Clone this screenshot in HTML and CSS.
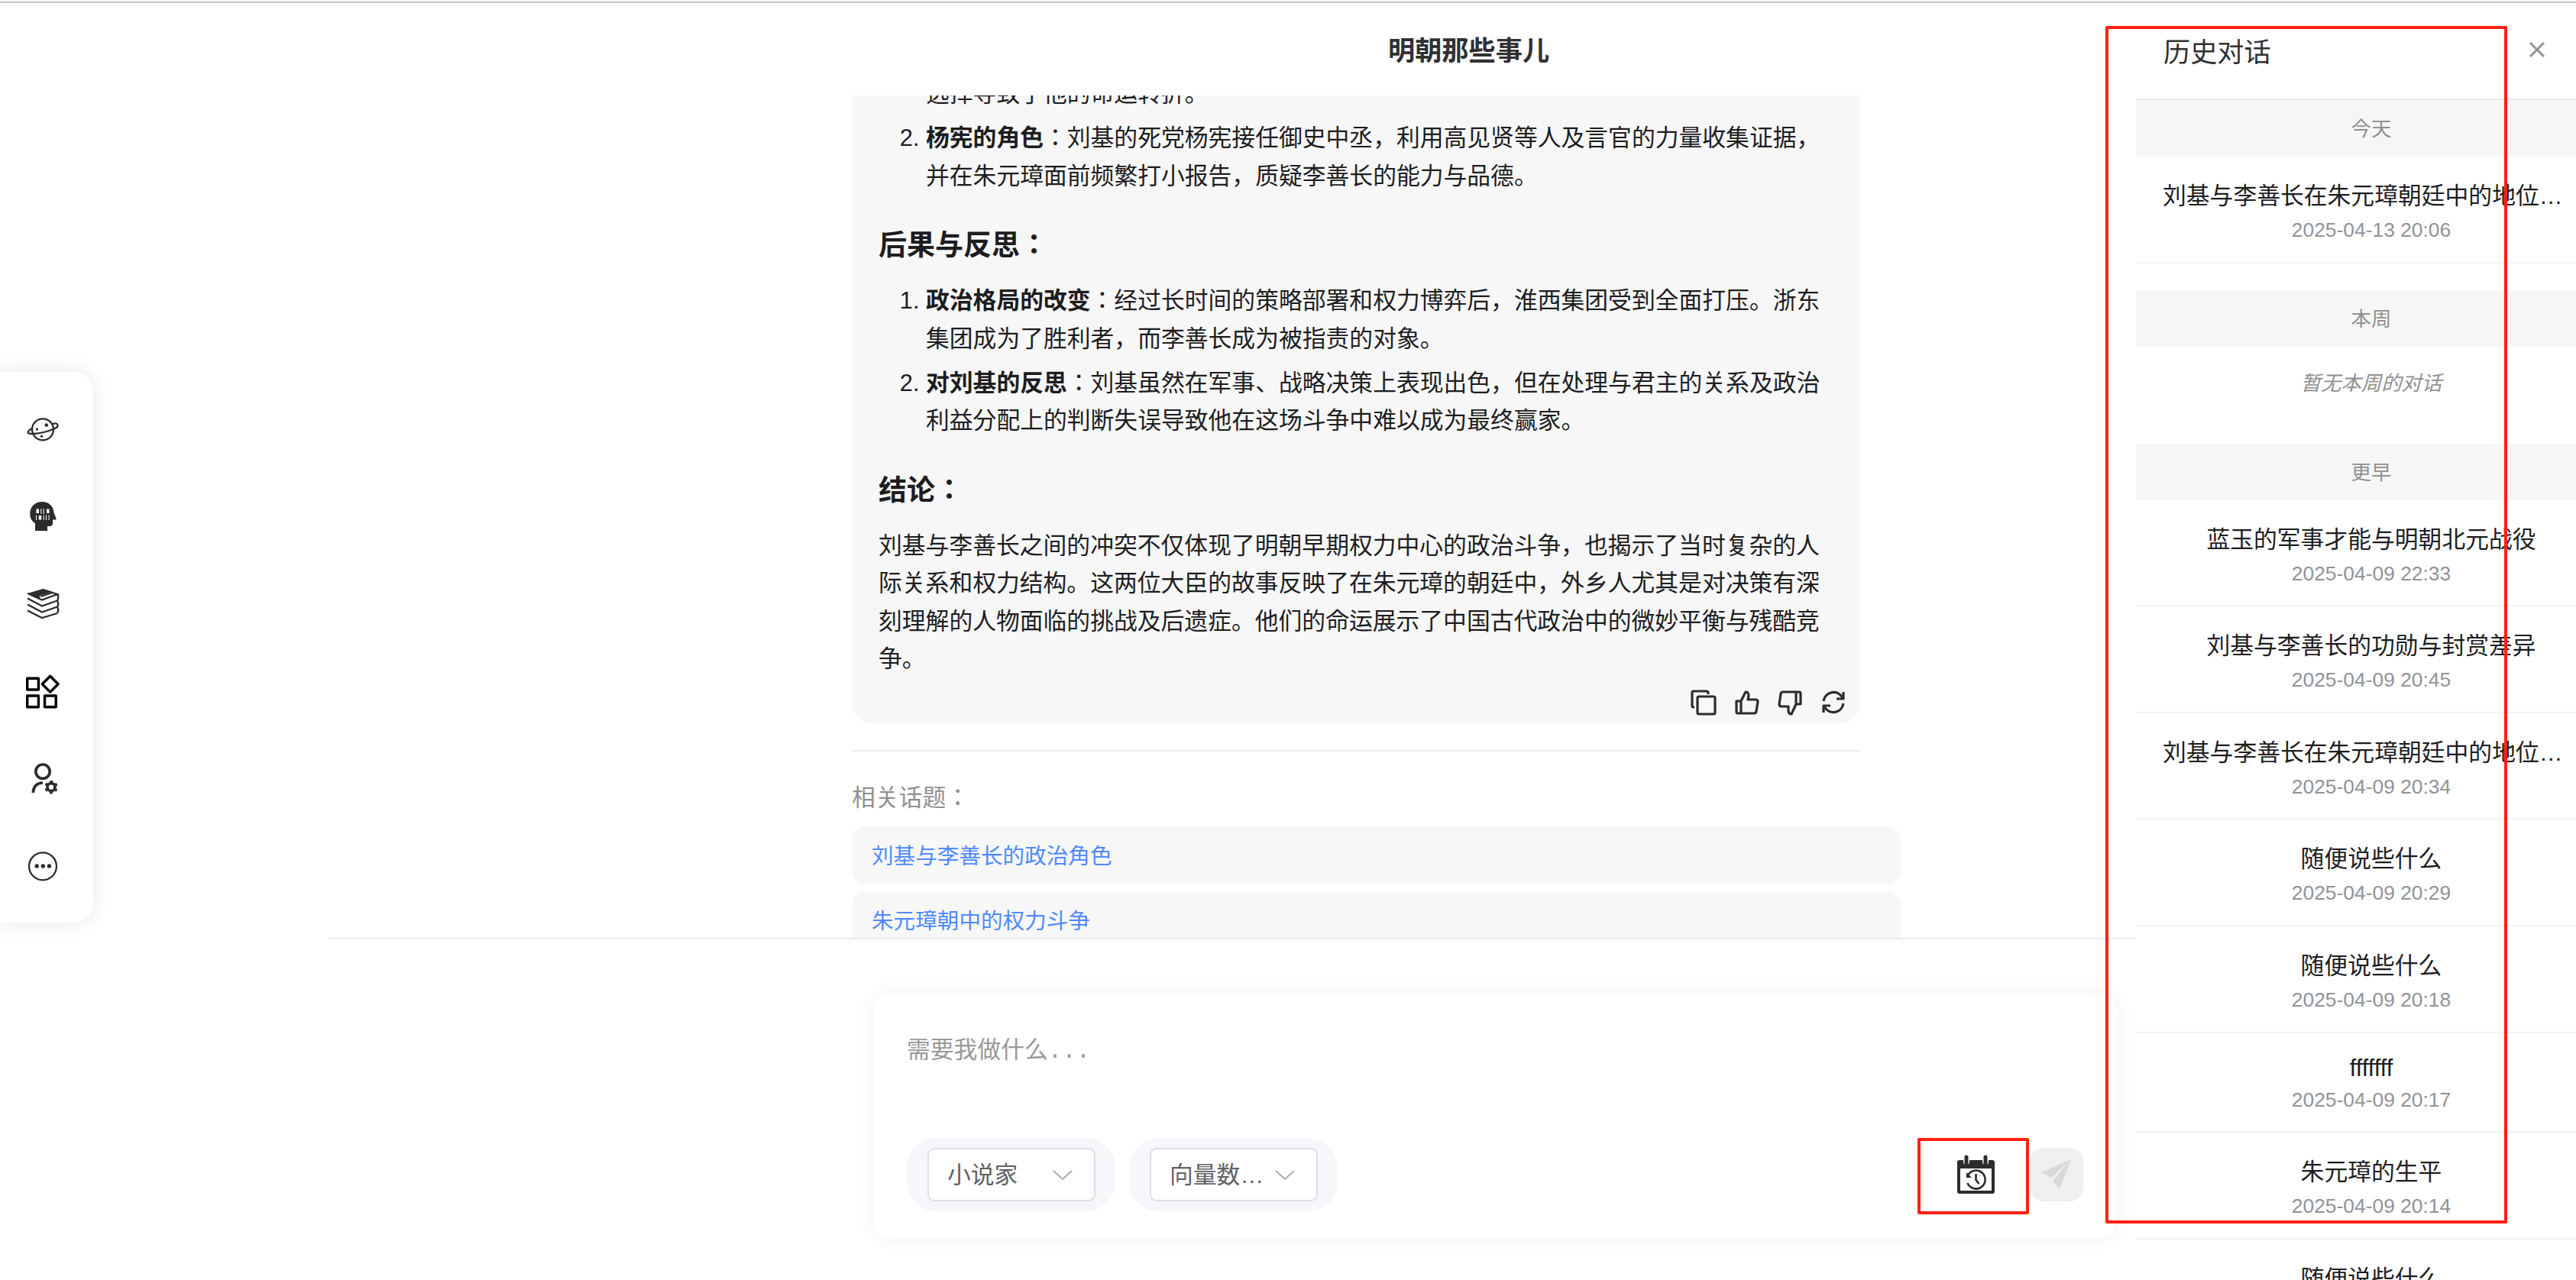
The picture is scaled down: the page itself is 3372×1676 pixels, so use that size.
FILE: index.html
```html
<!DOCTYPE html>
<html lang="en">
<head>
  <meta charset="UTF-8">
  <title>明朝那些事儿</title>
  <link rel="stylesheet" href="styles.css">
</head>
<body>
  <div class="app">
    <nav class="sidebar">
      <svg viewBox="0 0 44 44"><circle cx="22" cy="22.300" r="14" class="line"/><path class="line" d="M8 21C1 25 1 28 7 28c11 0 22-3 31-7 6-3 4-8-3-6"/><circle cx="14.500" cy="22" r="1.700"/><circle cx="26.800" cy="16.600" r="2.300"/><circle cx="20.500" cy="31.300" r="1.700"/></svg>
      <svg viewBox="0 0 44 44"><path d="M12 41V31C7 28 5.300 24 5.300 18.500 5.300 9 12 3 21 3c9 0 15 6 15.500 14l3 8v1.500H35V31q0 4-4 4h-3v6z"/><path class="code" d="M13.500 12.500H17V18h-3.500zM19.300 12h1v7h-1zM22.700 12h1v7h-1zM27 12.500h3.500V18H27zM13 20.500h1V27h-1zM16.700 21h3.500v5.500h-3.500zM22.700 20.500h1V27h-1zM26 20.500h1V27h-1zM29.500 20.500h1V27h-1z"/></svg>
      <svg viewBox="0 0 44 44"><path d="M2 9l20-6 13 4-17 5v4z"/><path class="line" d="M2 9l19 8.500L41 10 22 4M19 13l16-5M2 15.500l19 10 20-7M2 23.500l19 10 20-7M2 31.500L21 41l20-6M41 10q2.500 4 0 8.500 2.500 4 0 8 2.500 4.500 0 8.500"/></svg>
      <svg class="dark" viewBox="0 0 44 44"><path d="M1.700 5.300h14.700V20H1.700zM1.700 28h14.700v14.700H1.700zM24.500 28h14.700v14.700H24.500zM31.700 2.200l10.400 10.500-10.400 10.400-10.400-10.400z"/></svg>
      <svg viewBox="0 0 44 44"><circle cx="22" cy="13.200" r="9.200" class="bold"/><path class="bold" d="M9.300 41Q10 28.500 22 28"/><circle cx="33" cy="33.700" r="5" class="bold"/><circle cx="33" cy="33.700" r="7.500" class="cog"/></svg>
      <svg viewBox="0 0 44 44"><circle cx="22" cy="23.300" r="18" class="line"/><circle cx="14.200" cy="23" r="2.700"/><circle cx="22.300" cy="23" r="2.700"/><circle cx="30.400" cy="23" r="2.700"/></svg>
    </nav>

    <main class="main">
      <h1 class="title">明朝那些事儿</h1>
      <div class="chat">
        <div class="message">
          <ol class="cut">
            <li>选择导致了他的命运转折。</li>
            <li><b>杨宪的角色</b>：刘基的死党杨宪接任御史中丞，利用高见贤等人及言官的力量收集证据，并在朱元璋面前频繁打小报告，质疑李善长的能力与品德。</li>
          </ol>
          <h3>后果与反思：</h3>
          <ol>
            <li><b>政治格局的改变</b>：经过长时间的策略部署和权力博弈后，淮西集团受到全面打压。浙东集团成为了胜利者，而李善长成为被指责的对象。</li>
            <li><b>对刘基的反思</b>：刘基虽然在军事、战略决策上表现出色，但在处理与君主的关系及政治利益分配上的判断失误导致他在这场斗争中难以成为最终赢家。</li>
          </ol>
          <h3>结论：</h3>
          <p>刘基与李善长之间的冲突不仅体现了明朝早期权力中心的政治斗争，也揭示了当时复杂的人际关系和权力结构。这两位大臣的故事反映了在朱元璋的朝廷中，外乡人尤其是对决策有深刻理解的人物面临的挑战及后遗症。他们的命运展示了中国古代政治中的微妙平衡与残酷竞争。</p>
          <div class="actions">
            <svg viewBox="0 0 34 34"><path d="M5 23H4q-2 0-2-2V4q0-2 2-2h17q2 0 2 2v2"/><rect x="9" y="9" width="23" height="23" rx="2"/></svg>
            <svg viewBox="0 0 34 34"><path d="M3 15h6v16H5q-2 0-2-2zM9 15l6-12q4 0 4 5l-1 5h10q3 0 3 3l-2 12q0 3-3 3H9"/></svg>
            <svg viewBox="0 0 34 34"><path d="M31 19h-6V3h4q2 0 2 2zM25 19l-6 13q-4 0-4-5v-5H6q-3 0-3-3L5 6q0-3 3-3h17"/></svg>
            <svg viewBox="0 0 34 34"><path d="M4 15C6 2 23-1 29 11M30 3v9h-9M30 18C28 31 11 34 5 22M4 30v-9h9"/></svg>
          </div>
        </div>
        <div class="divider"></div>
        <div class="related">相关话题：</div>
        <a class="topic">刘基与李善长的政治角色</a>
        <a class="topic">朱元璋朝中的权力斗争</a>
      </div>

      <div class="composer">
        <div class="placeholder">需要我做什么...</div>
        <div class="tools">
          <div class="pill"><div class="select"><span>小说家</span><svg viewBox="0 0 26 14"><path d="M1 1l12 11L25 1"/></svg></div></div>
          <div class="pill"><div class="select"><span>向量数据库</span><svg viewBox="0 0 26 14"><path d="M1 1l12 11L25 1"/></svg></div></div>
          <div class="history-btn">
            <svg viewBox="0 0 49 50"><path d="M3 6h5v2a4 4 0 0 0 8 0V6h17v2a4 4 0 0 0 8 0V6h5q3 0 3 3v38q0 3-3 3H3q-3 0-3-3V9q0-3 3-3zM4 17v29h41V17z" fill-rule="evenodd"/><path d="M12 2v8M37 2v8" class="ring"/><path d="M13.500 36A12 12 0 1 0 14 26M24.500 24v8l4 5" class="hand"/><path d="M12 22v7h7z"/></svg>
          </div>
          <div class="send"><svg viewBox="0 0 40 40"><path d="M0 17L39 0 13 24zM39 0L24 39 15 28z"/></svg></div>
        </div>
      </div>
    </main>

    <aside class="history">
      <div class="history-head">
        <span>历史对话</span>
        <svg viewBox="0 0 20 20"><path d="M1 1l18 18M19 1L1 19"/></svg>
      </div>
      <div class="group">今天</div>
      <div class="item"><div class="name">刘基与李善长在朱元璋朝廷中的地位与冲突</div><div class="date">2025-04-13 20:06</div></div>
      <div class="group next">本周</div>
      <div class="empty">暂无本周的对话</div>
      <div class="group">更早</div>
      <div class="item"><div class="name">蓝玉的军事才能与明朝北元战役</div><div class="date">2025-04-09 22:33</div></div>
      <div class="item"><div class="name">刘基与李善长的功勋与封赏差异</div><div class="date">2025-04-09 20:45</div></div>
      <div class="item"><div class="name">刘基与李善长在朱元璋朝廷中的地位与冲突</div><div class="date">2025-04-09 20:34</div></div>
      <div class="item"><div class="name">随便说些什么</div><div class="date">2025-04-09 20:29</div></div>
      <div class="item"><div class="name">随便说些什么</div><div class="date">2025-04-09 20:18</div></div>
      <div class="item"><div class="name latin">fffffff</div><div class="date">2025-04-09 20:17</div></div>
      <div class="item"><div class="name">朱元璋的生平</div><div class="date">2025-04-09 20:14</div></div>
      <div class="item"><div class="name">随便说些什么</div></div>
    </aside>

    <div class="mark mark-history"></div>
    <div class="mark mark-button"></div>
  </div>
</body>
</html>
```
FILE: styles.css
```css
* { box-sizing: border-box; }
body { margin: 0; font-family: "Liberation Sans", "Noto Sans CJK JP", sans-serif; font-size: 30.8px; color: #1d1d1f; background: #fff; }
h1, h3, p, ol { margin: 0; padding: 0; }
svg { display: block; flex: none; overflow: visible; }

.app { position: relative; display: flex; height: 1676px; overflow: hidden; padding-top: 4px; }
.app::before { content: ""; position: absolute; top: 0; left: 0; right: 0; height: 2px; background: #f7f7f7; border-bottom: 2px solid #c8c8c8; }

/* left menu */
.sidebar { width: 122px; height: 721px; margin: 483px 308px 0 0; padding-left: 34px; flex: none; display: flex; flex-direction: column; gap: 70.200px; padding-top: 53px; background: #fff; border-radius: 0 26px 26px 0; box-shadow: 0 0 26px rgba(0, 0, 0, .1); }
.sidebar svg { width: 44px; height: 44px; fill: #2c2c2c; }
.sidebar .line { fill: none; stroke: #2c2c2c; stroke-width: 2.3; }
.sidebar .bold { fill: none; stroke: #2c2c2c; stroke-width: 3.7; }
.sidebar .cog { fill: none; stroke: #2c2c2c; stroke-width: 2.4; stroke-dasharray: 3.9 3.954; stroke-dashoffset: 1.95; transform: rotate(30deg); transform-origin: 33px 33.700px; }
.sidebar .code { fill: #fff; }
.sidebar .dark { fill: none; stroke: #000; stroke-width: 3.4; stroke-linejoin: round; }

/* conversation */
.main { width: 2366px; flex: none; }
.title { height: 121px; padding: 0 0 0 1387px; font-size: 35.2px; line-height: 125px; color: #303133; }
.chat { height: 1105px; overflow: hidden; padding-left: 685px; border-bottom: 2px solid #ebebf0; }
.message { width: 1320px; height: 822px; padding: 0 35px; background: #f7f7f7; border-radius: 0 0 26px 26px; line-height: 49.28px; overflow: hidden; }
.message ol { padding-left: 62px; }
.message li + li { margin-top: 9px; }
.message .cut { margin-top: -27px; }
.message .cut li:first-child { list-style: none; }
.message h3 { margin: 37.500px 0 18px; font-size: 37px; line-height: 59px; }
.actions { display: flex; justify-content: flex-end; gap: 22.600px; margin: 16px -17px 0 0; }
.actions svg { width: 34px; height: 34px; fill: none; stroke: #2c2c2c; stroke-width: 3.2; stroke-linejoin: round; }
.divider { width: 1320px; height: 2px; margin-top: 35px; background: #ebebf0; }
.related { height: 98px; padding-top: 36px; line-height: 49px; color: #909090; }
.topic { display: block; width: 1373px; height: 76px; margin-bottom: 9px; padding-left: 26px; border-radius: 18px; background: #f7f7f7; font-size: 28.6px; line-height: 78px; color: #4f8aff; }

/* input box */
.composer { width: 1628px; height: 322px; margin: 70px 0 0 713px; padding: 52px 44px 36px; display: flex; flex-direction: column; justify-content: space-between; border-radius: 26px; background: #fff; box-shadow: 0 0 26px rgba(0, 0, 0, .06); }
.placeholder { font-family: "Liberation Mono", "Noto Sans CJK JP", monospace; line-height: 50px; color: #999; }
.tools { display: flex; align-items: center; }
.pill { width: 273px; height: 96px; margin-right: 18px; padding: 13px 27px; border-radius: 38px; background: #f5f7fb; }
.select { display: flex; align-items: center; width: 220px; height: 70px; padding: 0 24px; border: 2px solid #dcdfe6; border-radius: 9px; background: #fff; color: #606266; }
.select span { width: 126px; margin: -5px 12px 0 0; overflow: hidden; text-overflow: ellipsis; white-space: nowrap; }
.select svg { width: 26px; height: 14px; margin-top: 2px; fill: none; stroke: #a8abb2; stroke-width: 2; }
.history-btn { margin: 0 46px 0 auto; }
.history-btn svg { width: 49px; height: 50px; fill: #2c2c2c; }
.history-btn .ring { stroke: #2c2c2c; stroke-width: 5; stroke-linecap: round; }
.history-btn .hand { fill: none; stroke: #2c2c2c; stroke-width: 2.6; }
.send { width: 70px; height: 70px; padding: 15px; border-radius: 18px; background: #efefef; }
.send svg { width: 40px; height: 40px; fill: #d9d9d9; }

/* history panel */
.history { position: relative; width: 616px; flex: none; background: #fff; text-align: center; }
.history-head { display: flex; align-items: center; height: 127px; padding: 0 81px 3px 36px; border-bottom: 2px solid #e8eaf0; justify-content: space-between; font-size: 35.2px; color: #303133; }
.history-head svg { width: 20px; height: 20px; fill: none; stroke: #909399; stroke-width: 3; }
.group { height: 74px; background: #f6f6f7; font-size: 26.4px; line-height: 77px; color: #909090; }
.group.next { margin-top: 35px; }
.item { padding: 27px 35px 26.600px; border-bottom: 2px solid #f0f2f6; }
.name { height: 45px; line-height: 49px; overflow: hidden; text-overflow: ellipsis; white-space: nowrap; }
.name.latin { height: 36px; line-height: 38px; }
.date { margin-top: 9px; font-size: 26.4px; line-height: 30px; color: #909399; }
.empty { height: 127px; font-size: 26.4px; line-height: 96px; font-style: italic; color: #909090; }

/* highlight frames over the page */
.mark { position: absolute; border: 4px solid #ff2010; border-radius: 2px; }
.mark-history { left: 2756px; top: 34px; width: 526px; height: 1568px; }
.mark-button { left: 2510px; top: 1490px; width: 146px; height: 100px; }
```
